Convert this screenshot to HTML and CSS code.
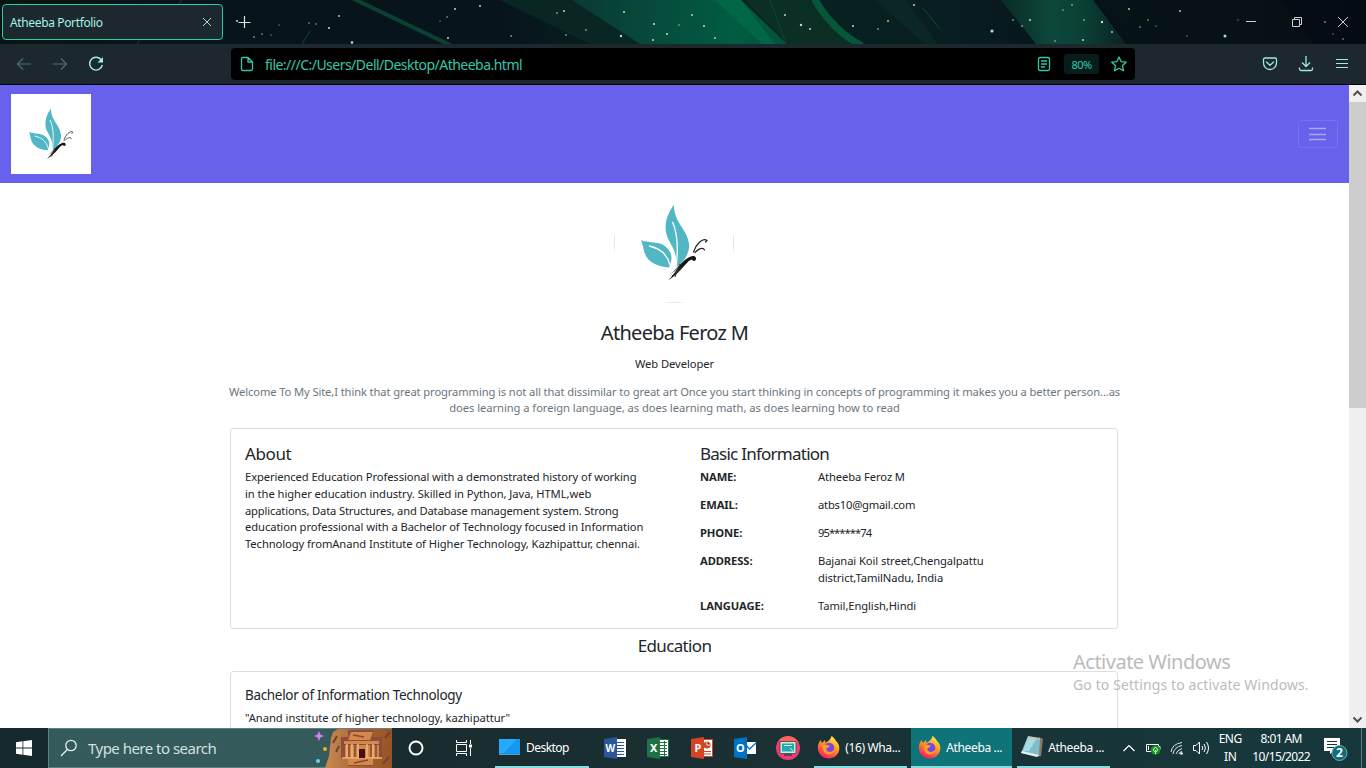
FILE: index.html
```
<!DOCTYPE html>
<html lang="en">
<head>
<meta charset="utf-8">
<title>Atheeba Portfolio</title>
<link rel="stylesheet" href="styles.css">
</head>
<body>
<svg class="defs" width="0" height="0">
  <defs>
    <symbol id="butterfly" viewBox="0 0 120 120">
      <path fill="#51b7c4" d="M59.700 22C54 30 51 38 51.700 47C53 61 65 65 61.500 85C70 79 76 70 75 61C73 45 61 42 59.700 22Z"/>
      <path fill="#51b7c4" d="M27 57C36 61 47 57 54 66C59 72 58 78 55 84.500C44 84 34 79 31 71C29 66 29 61 27 57Z"/>
      <path fill="none" stroke="#fff" stroke-width="1.300" d="M58.500 39C64 51 64.500 65 62 85M35 63C45 65 53 70 56 82"/>
      <path fill="#151515" d="M55 91.500C62 88 66 80 73 75.500C77 72.500 81 72 82 75C82.500 78 79 79 78 76.500C75 77 74 79 71 82C66 88 61 93 54 97.500C60 92 61 88 66 83C62 87 59 90 55 91.500Z"/>
      <path fill="none" stroke="#333" stroke-width="1" d="M66 81L61 94M58 93L68 84"/>
      <path fill="none" stroke="#222" stroke-width="1.200" stroke-linecap="round" d="M79.500 69C82 61 89 54 93 57.500L91.500 59M81 69.500C84 66 89 63.500 90.500 67"/>
    </symbol>
    <linearGradient id="flame" x1=".8" y1="0" x2=".3" y2="1"><stop offset="0" stop-color="#fff14f"/><stop offset=".45" stop-color="#ff9a24"/><stop offset="1" stop-color="#f5156c"/></linearGradient>
    <symbol id="firefox" viewBox="0 0 24 24">
      <path fill="url(#flame)" d="M14.500 1C18 3 18.500 6 20.500 7.500C25 14 21 23 12 23.500C4 23.500 0 17 1 10.500C1.500 8 2.500 6.500 3.500 5L5 8L8 5L8.500 8C11 6 13.500 5 14.500 1Z"/>
      <circle cx="12" cy="13" r="5.300" fill="#7b45e0"/>
      <path fill="#ff9b22" d="M5 10.500C8 8.500 10 10 13 10.800C12 13 9 12.500 9.500 15C11 18 15.500 17.500 17.500 14C18 20 9 21.500 6.500 16Z"/>
    </symbol>
  </defs>
</svg>
<header class="titlebar">
  <svg class="aurora" width="1366" height="44" viewBox="0 0 1366 44" preserveAspectRatio="none">
    <defs>
      <linearGradient id="sky"><stop offset="0" stop-color="#08150f"/><stop offset=".15" stop-color="#07141a"/><stop offset=".36" stop-color="#07141b"/><stop offset=".5" stop-color="#09251f"/><stop offset=".7" stop-color="#081d20"/><stop offset=".85" stop-color="#060e15"/><stop offset="1" stop-color="#050b13"/></linearGradient>
      <linearGradient id="band"><stop offset="0" stop-color="#0a3a32"/><stop offset=".35" stop-color="#07493b"/><stop offset=".75" stop-color="#005c42"/><stop offset="1" stop-color="#055139"/></linearGradient>
      <linearGradient id="band2"><stop offset="0" stop-color="#0a2a26"/><stop offset=".4" stop-color="#0c483a"/><stop offset=".65" stop-color="#0b4034"/><stop offset="1" stop-color="#082321"/></linearGradient>
    </defs>
    <rect width="1366" height="44" fill="url(#sky)"/>
    <path fill="#0a2623" d="M500 0H580L645 44H590Z"/>
    <path fill="url(#band)" d="M572 0H741L787 44H640Z"/>
    <path fill="#02704b" opacity=".6" d="M715 0H741L775 44H762Z"/>
    <path fill="#0b2e25" d="M745 0H810L850 44H787Z"/>
    <path fill="none" stroke="#065738" stroke-width="7" d="M814 -2Q832 30 862 46"/>
    <path fill="#0a2726" d="M876 0H905L938 44H924Z"/>
    <path fill="url(#band2)" d="M1001 0H1093L1126 44H1036Z"/>
    <path fill="#071518" d="M1096 0H1280L1315 44H1134Z" opacity=".6"/>
    <path fill="none" stroke="#0a4131" stroke-width="4" d="M352 -2L452 46"/>
    <path fill="none" stroke="#0c4936" d="M923 8L940 29M182 0L174 10M310 31L302 44M770 0L786 43M142 36L137 44"/>
    <g fill="#b9dcd2">
      <circle cx="237" cy="21" r="1"/><circle cx="279" cy="25" r=".6"/><circle cx="254" cy="37" r=".8"/><circle cx="262" cy="34" r=".7"/><circle cx="271" cy="35" r=".6"/><circle cx="309" cy="23" r=".7"/><circle cx="316" cy="24" r=".7"/><circle cx="329" cy="28" r="1.100"/><circle cx="339" cy="16" r=".9"/><circle cx="352" cy="42.500" r="1.300"/><circle cx="440" cy="21" r=".6"/><circle cx="447" cy="17" r=".7"/><circle cx="455" cy="9" r="1"/><circle cx="448" cy="38" r="1"/><circle cx="480" cy="6" r="1"/><circle cx="511" cy="36" r=".8"/><circle cx="564" cy="11" r="1"/><circle cx="557" cy="13" r=".8"/><circle cx="566" cy="35" r=".8"/><circle cx="586" cy="30" r=".8"/><circle cx="624" cy="12" r="1"/><circle cx="621" cy="36" r="1.200"/><circle cx="654" cy="24" r="1.100"/><circle cx="653" cy="40" r="1"/><circle cx="667" cy="34" r="1"/><circle cx="679" cy="25" r=".7"/><circle cx="692" cy="15" r=".9"/><circle cx="704" cy="26" r="1"/><circle cx="715" cy="38" r=".9"/><circle cx="785" cy="15" r="1"/><circle cx="801" cy="25" r="1.200"/><circle cx="810" cy="29" r="1"/><circle cx="853" cy="26" r="1"/><circle cx="878" cy="29" r=".8"/><circle cx="888" cy="21" r=".9"/><circle cx="914" cy="5" r="1"/><circle cx="992" cy="31" r="1.600"/><circle cx="1013" cy="20" r=".8"/><circle cx="1030" cy="20" r="1"/><circle cx="1022" cy="26" r=".8"/><circle cx="1072" cy="5" r=".8"/><circle cx="1063" cy="10" r=".7"/><circle cx="1084" cy="20" r=".8"/><circle cx="1102" cy="22" r="1.200"/><circle cx="1112" cy="32" r=".9"/><circle cx="1083" cy="40" r="1"/><circle cx="1055" cy="41" r=".8"/><circle cx="1129" cy="9" r=".9"/><circle cx="1180" cy="11" r=".9"/><circle cx="1148" cy="20" r=".7"/><circle cx="1140" cy="27" r=".7"/><circle cx="1156" cy="26" r=".6"/><circle cx="1187" cy="36" r=".6"/><circle cx="1225" cy="36" r="1.500"/><circle cx="1238" cy="20" r=".6"/><circle cx="1325" cy="22" r=".8"/><circle cx="1333" cy="34" r=".6"/><circle cx="1343" cy="39" r=".7"/>
    </g>
  </svg>
  <div class="tab"><span class="tab-name">Atheeba Portfolio</span>
    <svg width="10" height="10" viewBox="0 0 10 10"><path d="M1 1L9 9M9 1L1 9" stroke="#a9dfd3" fill="none"/></svg></div>
  <svg class="new-tab" width="14" height="14" viewBox="0 0 14 14"><path d="M7.500 1V13M1.500 7.500H13.500" stroke="#d6e8e3" stroke-width="1.200"/></svg>
  <svg class="win-controls" width="104" height="14" viewBox="0 0 104 14"><path d="M1 6.500H11M47.500 4.500H54.500V11.500H47.500ZM49.500 4.500V2.500H56.500V9.500H54.500M93 2L103 12M103 2L93 12" stroke="#c8d5d2" fill="none"/></svg>
</header>
<nav class="toolbar">
  <div class="nav-buttons">
    <svg width="16" height="14" viewBox="0 0 16 14"><path d="M15 7H1.500M7 1.500L1.500 7L7 12.500" stroke="#4b706e" stroke-width="1.200" fill="none"/></svg>
    <svg width="16" height="14" viewBox="0 0 16 14"><path d="M1 7H14.500M9 1.500L14.500 7L9 12.500" stroke="#4b706e" stroke-width="1.200" fill="none"/></svg>
    <svg width="16" height="16" viewBox="0 0 16 16"><path d="M13.300 4A6.400 6.400 0 1 0 14.300 9" stroke="#a0efe0" stroke-width="1.400" fill="none"/><path d="M15 1V6.500H9.500Z" fill="#a0efe0"/></svg>
  </div>
  <div class="address">
    <svg width="14" height="16" viewBox="0 0 14 16"><path d="M2.500 1.500H8L12.500 6V13Q12.500 14.500 11 14.500H3Q1.500 14.500 1.500 13V2.500Q1.500 1.500 2.500 1.500ZM8 1.500V6H12.500" stroke="#34c7ac" stroke-width="1.300" fill="none"/></svg>
    <span class="url">file:///C:/Users/Dell/Desktop/Atheeba.html</span>
    <svg class="reader" width="14" height="16" viewBox="0 0 14 16"><path d="M3 1.500H11Q12.500 1.500 12.500 3V13Q12.500 14.500 11 14.500H3Q1.500 14.500 1.500 13V3Q1.500 1.500 3 1.500ZM4 5H10M4 8H10M4 11H8" stroke="#34c7ac" stroke-width="1.300" fill="none"/></svg>
    <span class="zoom">80%</span>
    <svg width="16" height="16" viewBox="0 0 16 16"><path d="M8 1L10.100 5.600L15.200 6.200L11.500 9.600L12.500 14.800L8 12.300L3.500 14.800L4.500 9.600L.8 6.200L5.900 5.600Z" stroke="#34c7ac" stroke-width="1.300" stroke-linejoin="round" fill="none"/></svg>
  </div>
  <div class="tools">
    <svg width="16" height="16" viewBox="0 0 16 16"><path d="M3 2H13Q14.500 2 14.500 3.500V7A6.500 6.500 0 0 1 1.500 7V3.500Q1.500 2 3 2ZM4.500 6L8 9.300L11.500 6" stroke="#9cebdc" stroke-width="1.300" stroke-linecap="round" fill="none"/></svg>
    <svg width="16" height="16" viewBox="0 0 16 16"><path d="M8 0V10M4 6.500L8 10.500L12 6.500M1.500 11.500V13Q1.500 14.500 3 14.500H13Q14.500 14.500 14.500 13V11.500" stroke="#9cebdc" stroke-width="1.300" fill="none"/></svg>
    <svg width="14" height="16" viewBox="0 0 14 16"><path d="M1 3.500H13M1 7.500H13M1 11.500H13" stroke="#9cebdc" stroke-width="1.200"/></svg>
  </div>
</nav>
<div class="viewport">
  <main class="page">
    <div class="navbar">
      <div class="brand"><svg width="80" height="80"><use href="#butterfly"/></svg></div>
      <div class="toggler"><svg width="20" height="20" viewBox="0 0 20 20"><path d="M1 4.500H18M1 10.500H18M1 15.500H18" stroke="#afa9f3" stroke-width="1.500"/></svg></div>
    </div>
    <section class="profile">
      <div class="avatar"><svg width="120" height="120"><use href="#butterfly"/></svg></div>
      <h1>Atheeba Feroz M</h1>
      <p class="role">Web Developer</p>
      <p class="welcome"><span class="w1">Welcome To My Site,I think that great programming is not all that dissimilar to great art Once you start thinking in concepts of programming it makes you a better person...as</span><br><span class="w2">does learning a foreign language, as does learning math, as does learning how to read</span></p>
    </section>
    <section class="card info">
      <div class="about"><h2>About</h2>
        <p>Experienced Education Professional with a demonstrated history of working<br><span class="l2">in the higher education industry. Skilled in Python, Java, HTML,web</span><br><span class="l3">applications, Data Structures, and Database management system. Strong</span><br><span class="l4">education professional with a Bachelor of Technology focused in Information</span><br><span class="l4">Technology fromAnand Institute of Higher Technology, Kazhipattur, chennai.</span></p>
      </div>
      <div class="basic"><h2>Basic Information</h2>
        <dl>
          <dt>NAME:</dt><dd>Atheeba Feroz M</dd>
          <dt>EMAIL:</dt><dd class="email">atbs10@gmail.com</dd>
          <dt>PHONE:</dt><dd class="phone">95******74</dd>
          <dt>ADDRESS:</dt><dd>Bajanai Koil street,Chengalpattu<br>district,TamilNadu, India</dd>
          <dt>LANGUAGE:</dt><dd>Tamil,English,Hindi</dd>
        </dl>
      </div>
    </section>
    <h2 class="edu-title">Education</h2>
    <section class="card edu"><h3>Bachelor of Information Technology</h3><p>"Anand institute of higher technology, kazhipattur"</p></section>
  </main>
  <aside class="scrollbar">
    <svg width="17" height="17" viewBox="0 0 17 17"><path d="M4.500 10.500L8.500 6.500L12.500 10.500" stroke="#505050" stroke-width="2" fill="none"/></svg>
    <div class="thumb"></div>
    <svg class="down" width="17" height="17" viewBox="0 0 17 17"><path d="M4.500 6.500L8.500 10.500L12.500 6.500" stroke="#505050" stroke-width="2" fill="none"/></svg>
  </aside>
  <div class="watermark"><div class="wm-title">Activate Windows</div><div class="wm-sub">Go to Settings to activate Windows.</div></div>
</div>
<footer class="taskbar">
  <div class="start"><svg width="16" height="16" viewBox="0 0 16 16"><path fill="#fff" d="M0 2.200L6.500 1.300V7.500H0ZM7.300 1.200L16 0V7.500H7.300ZM0 8.400H6.500V14.700L0 13.800ZM7.300 8.400H16V16L7.300 14.800Z"/></svg></div>
  <div class="search">
    <svg width="18" height="18" viewBox="0 0 18 18"><circle cx="11" cy="6.500" r="5.200" stroke="#e6efef" stroke-width="1.300" fill="none"/><path d="M7.300 10.500L1 17" stroke="#e6efef" stroke-width="1.300"/></svg>
    <span class="search-text">Type here to search</span>
    <svg class="petra" width="67" height="39" viewBox="0 0 67 39">
      <defs><linearGradient id="rock"><stop offset="0" stop-color="#c88a52"/><stop offset=".5" stop-color="#a86535"/><stop offset="1" stop-color="#985424"/></linearGradient></defs>
      <path fill="url(#rock)" d="M0 39L4 27L6 9L8 3L13 0H67V39Z"/>
      <path stroke="#70452f" stroke-width="2" d="M8 14L12 7M11 23L14 17M60 9L65 3M58 35L64 28"/>
      <path fill="#8e4d3b" d="M23 1H48V8H57V30H48V37H23V30H16V8H23Z"/>
      <path fill="#d4884c" d="M26 3H48L45 11H23ZM19 12H54V15H19ZM23 30H48V36H23Z"/>
      <path fill="#cc864e" d="M20 16H54V29H20Z"/>
      <path stroke="#8a482c" stroke-width="1.500" d="M24 16V28M30 16V28M46 16V28M51 16V28M28 6L39 8M29 34L43 31"/>
      <path stroke="#f3b678" stroke-width="1.500" d="M22 15V29M27 15V29M33 15V29M42 15V29M48 15V29M17 29H57"/>
      <path fill="#4a1018" d="M34 20H40V29H34Z"/>
    </svg>
    <svg class="sparkles" width="14" height="36" viewBox="0 0 14 36"><path fill="#db7cf2" d="M5 0L6.500 3.500L10 5L6.500 6.500L5 10L3.500 6.500L0 5L3.500 3.500Z"/><circle cx="11" cy="18" r="2" fill="#efad19"/><circle cx="4" cy="30" r="2" fill="#65d5e5"/></svg>
  </div>
  <div class="sys"><svg width="16" height="16" viewBox="0 0 16 16"><circle cx="8" cy="8" r="6.500" stroke="#fff" stroke-width="2" fill="none"/></svg></div>
  <div class="sys"><svg width="18" height="16" viewBox="0 0 18 16"><path d="M1.500 0V2.500H11.500V0M1.500 4.500H11.500V11.500H1.500ZM1.500 16V13.500H11.500V16M15.500 0V4M15.500 8V16" stroke="#fff" fill="none"/><path fill="#fff" d="M14 4.500H17V7.500H14Z"/></svg></div>
  <div class="task desktop"><svg width="21" height="16" viewBox="0 0 21 16"><path fill="#1497ee" d="M0 0H21V16H0Z"/><path fill="#24aaff" d="M0 0H18L5 14H0Z"/><path fill="#57a0b8" d="M0 15H21V16H0Z"/></svg><span>Desktop</span></div>
  <div class="pinned">
    <svg width="24" height="24" viewBox="0 0 24 24"><path fill="#fff" d="M12 3H23V21H12Z"/><path stroke="#2a579a" d="M13 6.500H21M13 9.500H21M13 12.500H21M13 15.500H21M13 18.500H21"/><path fill="#2a579a" d="M1 3L14 1V23L1 21Z"/><text x="2.500" y="16" font-size="10" class="letter">W</text></svg>
    <svg width="24" height="24" viewBox="0 0 24 24"><path fill="#fff" d="M12 3H23V21H12Z"/><path stroke="#207245" d="M14 6.500H21M14 9.500H21M14 12.500H21M14 15.500H21M14 18.500H21M18.500 5V20M22.500 3V21M12 3.500H23M12 20.500H23"/><path fill="#207245" d="M1 3L14 1V23L1 21Z"/><text x="4" y="16" font-size="11" class="letter">X</text></svg>
    <svg width="24" height="24" viewBox="0 0 24 24"><path fill="#fff" stroke="#d24625" d="M12 3.500H22.500V20.500H12Z"/><circle cx="17" cy="9" r="3.500" fill="#d24625"/><path stroke="#d24625" d="M14 15.500H21M14 18H21"/><path stroke="#fff" d="M17 6V9H20"/><path fill="#d24625" d="M1 3L14 1V23L1 21Z"/><text x="4.500" y="16" font-size="11" class="letter">P</text></svg>
    <svg width="24" height="24" viewBox="0 0 24 24"><path fill="#fff" d="M12 6H23V18H12Z"/><path fill="none" stroke="#0072c6" stroke-width="1.300" d="M13 9L16.500 13L23 7"/><path fill="#0072c6" d="M1 3L14 1V23L1 21Z"/><text x="3" y="16" font-size="11" class="letter">O</text></svg>
    <svg width="24" height="24" viewBox="0 0 24 24"><circle cx="12" cy="12" r="12" fill="#ee3d70"/><path fill="#ff6554" d="M3 4A12 12 0 0 1 22 6L12 12Z"/><path fill="#d8e3dc" stroke="#56575f" d="M4 5.500H20V17.500H4Z"/><path fill="#22aab2" d="M6 7.500H18V15.500H6Z"/><path stroke="#d8efb3" d="M8 9.500H16M14 12L17 15"/><path fill="#5a4154" d="M8 18H16V20H8Z"/></svg>
  </div>
  <div class="task wide"><svg width="24" height="24"><use href="#firefox"/></svg><span>(16) Wha...</span></div>
  <div class="task wide active"><svg width="24" height="24"><use href="#firefox"/></svg><span>Atheeba ...</span></div>
  <div class="task wide note"><svg width="24" height="24" viewBox="0 0 24 24"><path fill="#8b7960" d="M19 2L23 4L21 21L17 22Z"/><path fill="#80bdca" d="M8 1L20 3L19 21L1 18Z"/><path fill="#a9dce2" d="M8 2L17 3L9 16L3 16Z"/><path fill="#e3f2f2" d="M1 18L17 22L19 20L2 16Z"/><path stroke="#ccc2a3" stroke-width="1.500" d="M8 2L20 4"/></svg><span>Atheeba ...</span></div>
  <div class="tray">
    <svg width="14" height="8" viewBox="0 0 14 8"><path d="M1.500 7L7 1.500L12.500 7" stroke="#fff" stroke-width="1.200" fill="none"/></svg>
    <svg width="16" height="14" viewBox="0 0 16 14"><path d="M1.500 3.500H13.500V10.500H1.500ZM14 5.500H15V8.500M3.500 5V9" stroke="#fff" fill="none"/><circle cx="10.500" cy="9" r="4.800" fill="#149321"/><path d="M10.500 6L13 9L10.500 11L8 9ZM10.500 9V13" stroke="#d7f1d4" fill="none"/></svg>
    <svg width="14" height="14" viewBox="0 0 14 14"><path d="M1 11Q2 3 12 1.500M3 13Q4 6 12 4.500M6 13Q7 9 12 7.500M9 13Q9 11 12 10.500" stroke="#dfe6e6" fill="none"/><circle cx="11.500" cy="12.500" r="1.300" fill="#fff"/></svg>
    <svg width="18" height="14" viewBox="0 0 18 14"><path d="M.5 4.500H3L6.500 1V13L3 9.500H.5ZM9 5Q10.500 7 9 9M11 3Q14 7 11 11M13.500 1Q17.500 7 13.500 13" stroke="#fff" fill="none"/></svg>
    <div class="lang">ENG<br>IN</div>
    <div class="clock"><span class="time">8:01 AM</span><br>10/15/2022</div>
    <svg class="notes" width="24" height="26" viewBox="0 0 24 26"><path fill="#fff" d="M0 3H16V16H10L6 19V16H0Z"/><path stroke="#16373b" d="M3 6.500H13M3 9.500H13M3 12.500H10"/><circle cx="15.500" cy="18" r="7.500" fill="#0b6e78" stroke="#77a8ae"/><text x="12" y="22.300" font-size="12" class="letter">2</text></svg>
  </div>
</footer>
</body>
</html>
```
FILE: styles.css
```
* { box-sizing: border-box; }
body { margin: 0; width: 1366px; height: 768px; overflow: hidden; display: flex; flex-direction: column; background: #000; font-family: "Noto Sans", "Open Sans", sans-serif; white-space: nowrap; }
svg { display: block; flex: none; }
h1, h2, h3, p, dl, dd { margin: 0; font-weight: 400; }
.defs { position: absolute; }
.titlebar { height: 44px; position: relative; display: flex; align-items: center; flex: none; }
.aurora { position: absolute; inset: 0; }
.tab { position: relative; margin-left: 2px; width: 221px; height: 36px; border: 1px solid #2bc9ad; border-radius: 4px; background: #1c282e; display: flex; align-items: center; justify-content: space-between; padding: 0 10px 0 7px; }
.tab-name { color: #a3f2e2; font-size: 12px; letter-spacing: -.36px; }
.new-tab { position: relative; margin-left: 14px; }
.win-controls { position: relative; margin-left: auto; margin-right: 17px; }
.toolbar { height: 40px; background: #1c282e; display: flex; align-items: center; flex: none; }
.nav-buttons { display: flex; align-items: center; gap: 20px; padding-left: 16px; width: 231px; }
.address { width: 904px; height: 32px; background: #000; border-radius: 4px; display: flex; align-items: center; padding: 0 8px 0 9px; color: #34c7ac; }
.url { font-size: 14px; letter-spacing: -.52px; margin-left: 11px; }
.reader { margin-left: auto; }
.zoom { background: #071d1b; border-radius: 3px; font-size: 11px; letter-spacing: -.5px; width: 35px; height: 20px; line-height: 21px; text-align: center; margin: 0 12px 0 13px; }
.tools { display: flex; align-items: center; gap: 20px; margin-left: auto; margin-right: 18px; }
.tools svg:last-child { margin-left: 1px; margin-right: -1px; }
.viewport { height: 643px; margin-top: 1px; display: flex; position: relative; background: #fff; flex: none; }
.page { width: 1349px; height: 643px; overflow: hidden; color: #212529; }
.navbar { height: 98px; background: #6861eb; display: flex; align-items: center; justify-content: space-between; padding: 0 11px; }
.brand { background: #fff; }
.toggler { width: 40px; height: 28px; border: 1px solid #7972ee; border-radius: 3px; display: grid; place-items: center; }
.profile { text-align: center; }
.avatar { width: 120px; height: 120px; margin: 0 0 0 614px; border-radius: 60px; background: linear-gradient(#e3e3e3,#e3e3e3) left center/1px 18px no-repeat, linear-gradient(#e3e3e3,#e3e3e3) right center/1px 18px no-repeat, linear-gradient(#e8e8e8,#e8e8e8) center bottom/20px 1px no-repeat; }
h1 { font-size: 20px; line-height: 24px; margin-top: 18px; letter-spacing: -.7px; }
.role { font-size: 11.2px; line-height: 17px; margin-top: 10px; letter-spacing: -.08px; }
.welcome { color: #6c757d; font-size: 11.2px; line-height: 16px; margin-top: 12px; }
.w1 { letter-spacing: -.115px; }
.w2 { letter-spacing: -.055px; }
.card { width: 888px; margin-left: 230px; border: 1px solid #dfdfdf; border-radius: 3px; font-size: 11.2px; padding: 15px 14px; }
.info { height: 201px; margin-top: 12px; display: grid; grid-template-columns: 455px 1fr; }
h2 { font-size: 17px; line-height: 20px; letter-spacing: -.4px; }
.basic h2 { letter-spacing: -.75px; }
.about p { line-height: 16.8px; margin-top: 5px; letter-spacing: -.09px; }
.l2 { letter-spacing: -.05px; }
.l3 { letter-spacing: -.16px; }
.l4 { letter-spacing: -.07px; }
dl { display: grid; grid-template-columns: 118px 1fr; row-gap: 11.2px; line-height: 16.8px; margin-top: 5px; letter-spacing: -.09px; }
.email { letter-spacing: -.2px; }
.phone { letter-spacing: -.95px; }
dt { font-weight: 700; }
.edu-title { text-align: center; margin-top: 7px; letter-spacing: -.65px; }
.edu { height: 80px; margin-top: 15px; padding-top: 15px; }
h3 { font-size: 13.5px; line-height: 17px; letter-spacing: -.33px; }
.edu p { line-height: 17px; margin-top: 5px; letter-spacing: -.04px; }
.scrollbar { width: 17px; background: #f0f0f0; display: flex; flex-direction: column; }
.thumb { height: 306px; background: #cdcdcd; }
.down { margin-top: auto; }
.watermark { position: absolute; left: 1073px; top: 563px; color: #bbb; }
.wm-title { font-size: 20px; line-height: 28px; letter-spacing: -.5px; }
.wm-sub { font-size: 14px; line-height: 18px; letter-spacing: .11px; }
.taskbar { height: 40px; background: linear-gradient(90deg,#16292c,#1b3033 55%,#16373b 90%); color: #fff; display: flex; flex: none; font-size: 12px; letter-spacing: -.35px; }
.start { width: 48px; display: grid; place-items: center; }
.search { width: 344px; border: 1px solid #5f8284; border-right: 0; background: #345a5b; position: relative; display: flex; align-items: center; padding-left: 11px; }
.search-text { font-size: 15px; color: #d5e0e0; margin-left: 10px; letter-spacing: -.52px; }
.petra { margin-left: auto; }
.sparkles { position: absolute; left: 265px; top: 2px; }
.sys { width: 48px; display: grid; place-items: center; }
.task { display: flex; align-items: center; border-bottom: 2px solid #85dce1; padding-left: 4px; }
.desktop { width: 94px; margin-left: 7px; gap: 6px; letter-spacing: -.6px; }
.desktop { letter-spacing: -.55px; }
.pinned { display: flex; align-items: center; gap: 19.3px; margin: 0 14px 0 14px; }
.wide { width: 93px; gap: 4px; padding-left: 3px; }
.active { width: 101px; margin-left: 4px; background: #0e747a; padding-left: 7px; }
.note { margin-left: 5px; }
.tray { display: flex; align-items: center; flex: 1; padding-left: 12px; margin-right: 4px; border-right: 1px solid #617c80; gap: 9px; }
.lang, .clock { text-align: center; line-height: 18px; }
.lang { width: 24px; margin-left: -2px; letter-spacing: -.5px; }
.clock { width: 60px; letter-spacing: -.6px; }
.notes { margin-left: 4px; }
.letter { fill: #fff; font-family: "Noto Sans", sans-serif; font-weight: 700; letter-spacing: 0; }
```
